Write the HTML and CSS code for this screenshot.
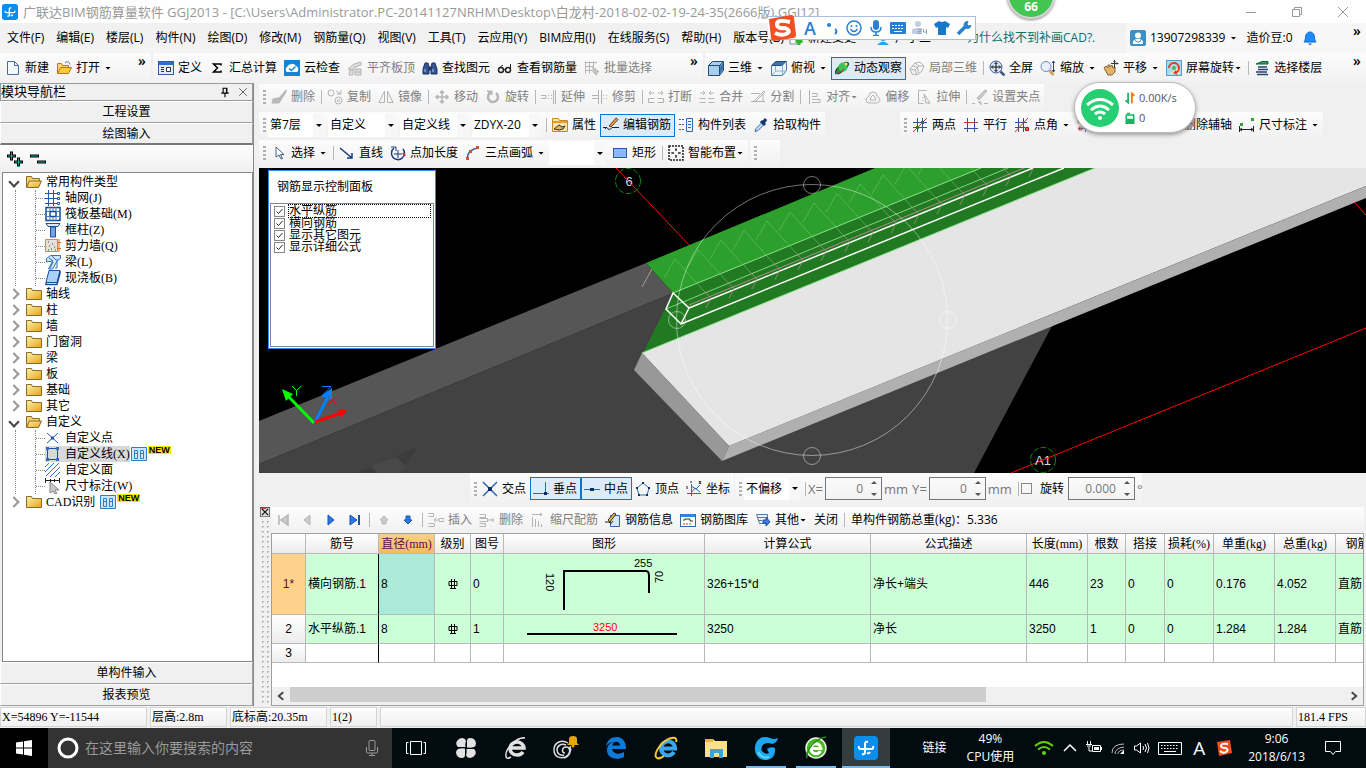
FILE: index.html
```html
<!DOCTYPE html>
<html lang="zh-CN">
<head>
    <meta charset="UTF-8">
    <meta name="viewport" content="width=device-width, initial-scale=1.0">
    <title>广联达BIM钢筋算量软件 GGJ2013</title>
    <link rel="stylesheet" href="styles.css">
</head>
<body>
    <header class="titlebar">
        <svg class="ico" viewBox="0 0 24 24"><use href="#app-logo"/></svg>
        <h1>广联达BIM钢筋算量软件 GGJ2013 - [C:\Users\Administrator.PC-20141127NRHM\Desktop\白龙村-2018-02-02-19-24-35(2666版).GGJ12]</h1>
        <div class="win-btns">
            <button aria-label="最小化"><svg class="ico" viewBox="0 0 16 16"><path d="M3 8.500h10"/></svg></button>
            <button aria-label="还原"><svg class="ico" viewBox="0 0 16 16"><path d="M3.500 5.500h7v7h-7zM5.500 5V3.500h7v7H11"/></svg></button>
            <button aria-label="关闭"><svg class="ico" viewBox="0 0 16 16"><path d="M3 3l10 10M13 3L3 13"/></svg></button>
        </div>
    </header>

    <div class="menubar">
        <nav class="menus">
            <button>文件(F)</button>
            <button>编辑(E)</button>
            <button>楼层(L)</button>
            <button>构件(N)</button>
            <button>绘图(D)</button>
            <button>修改(M)</button>
            <button>钢筋量(Q)</button>
            <button>视图(V)</button>
            <button>工具(T)</button>
            <button>云应用(Y)</button>
            <button>BIM应用(I)</button>
            <button>在线服务(S)</button>
            <button>帮助(H)</button>
            <button>版本号(B)</button>
        </nav>
        <div class="extra">
            <button class="tb"><svg class="ico" viewBox="0 0 16 16"><path d="M2 1h9v13H2z" fill="#fff" stroke="#789"/><path d="M11 8v7M7.500 11.500h7" stroke="#2db52d" stroke-width="3"/></svg>新建变更<i class="caret"></i></button>
            <button class="tb"><svg class="ico" viewBox="0 0 16 16"><circle cx="8" cy="6" r="5" fill="#27a3e8" stroke="none"/><path d="M2 15q6-7 12 0z" fill="#27a3e8" stroke="none"/></svg>广小二</button>
            <a class="tip" href="#faq">为什么找不到补画CAD?.</a>
        </div>
        <div class="account">
            <button class="tb"><svg class="ico" viewBox="0 0 16 16"><rect width="16" height="16" rx="2" fill="#3d8fc4" stroke="none"/><circle cx="8" cy="5.500" r="3" fill="#fff" stroke="none"/><path d="M3 14v-3l3-2h4l3 2v3z" fill="#fff" stroke="none"/><path d="M5 10.500l3 2 3-2" stroke="#3d8fc4"/></svg>13907298339<i class="caret"></i></button>
            <button class="tb">造价豆:0</button>
            <button class="tb" aria-label="消息"><svg class="ico" viewBox="0 0 16 16"><path d="M2 12c2-2 1-5 2-7 1-2 2-3 4-3s3 1 4 3c1 2 0 5 2 7z" fill="#1b8cff" stroke="#1565c0"/><path d="M6 13.500h4l-2 2z" fill="#1b6cd0" stroke="none"/></svg></button>
            <span class="more">»</span>
        </div>
    </div>

    <div class="mainbar">
        <div class="group g-file">
            <button class="tb"><svg class="ico" viewBox="0 0 16 16"><path d="M2.500 1.500h7l4 4v9h-11z" fill="#f5faff" stroke="#4b6b98"/><path d="M9.500 1.500v4h4" stroke="#4b6b98"/></svg>新建</button>
            <button class="tb"><svg class="ico" viewBox="0 0 16 16"><path d="M1.500 13.500V3.500h4l1 2h6v2" fill="#f8d77a" stroke="#b27c14"/><path d="M1.500 13.500l3-6h11l-3 6z" fill="#fdc64b" stroke="#b27c14"/><path d="M9 2.500q4-2 5 2" stroke="#57749b"/></svg>打开<i class="caret"></i></button>
            <span class="more">»</span>
        </div>
        <div class="group g-define">
            <button class="tb"><svg class="ico" viewBox="0 0 16 16"><rect x=".5" y="1.500" width="15" height="13" fill="#dfeafa" stroke="#2f5fa8"/><path d="M1 3.500h14" stroke="#2f6fd0" stroke-width="3"/><path d="M3 7.500h3M3 9.500h3M3 11.500h3" stroke="#333"/><path d="M8.500 7.500h4v4h-4z" fill="#fff" stroke="#333"/></svg>定义</button>
            <button class="tb"><svg class="ico" viewBox="0 0 16 16"><path d="M12 5.500V4H4.500l4 4-4 4H12v-1.500" stroke="#000" stroke-width="1.500"/></svg>汇总计算</button>
            <button class="tb"><svg class="ico" viewBox="0 0 16 16"><rect width="16" height="16" fill="#1484d4" stroke="none"/><path d="M3 12a3 3 0 0 1 0-5 5 4.500 0 0 1 9-1 3.500 3.500 0 0 1 1 6z" fill="#fff" stroke="none"/><path d="M5 8.500l2.500 2 4-4" stroke="#1484d4" stroke-width="1.500"/></svg>云检查</button>
            <button class="tb" disabled><svg class="ico" viewBox="0 0 16 16"><path d="M1 9l6-5 7-2v3L8 7l-2 3zM3 10h3v5H2zM8 9h6v6H8zM8 12h6" fill="#ddd"/></svg>平齐板顶</button>
            <button class="tb"><svg class="ico" viewBox="0 0 16 16"><path d="M3 3h3l1 4v7H1V9zM10 3h3l2 6v5H9V7zM7 7h2v3H7z" fill="#34558f" stroke="#1c3566"/><path d="M3 9v3M11 9v3" stroke="#b5cdf5"/></svg>查找图元</button>
            <button class="tb"><svg class="ico" viewBox="0 0 16 16"><circle cx="4" cy="10" r="2.500" stroke="#222" stroke-width="1.500"/><circle cx="11" cy="10" r="2.500" stroke="#222" stroke-width="1.500"/><path d="M6.500 9.500h2M2 8l4-3M13.500 9V4" stroke="#222"/></svg>查看钢筋量</button>
            <button class="tb" disabled><svg class="ico" viewBox="0 0 16 16"><path d="M1.500 1.500v12M5.500 1.500v12M9.500 1.500v6M1 2.500h12M1 6.500h9M1 10.500h7"/><path d="M9 7l6 5h-3l1 3-2-1-2-2z" fill="#ccc"/></svg>批量选择</button>
            <span class="more">»</span>
        </div>
        <div class="group g-view">
            <button class="tb"><svg class="ico" viewBox="0 0 16 16"><path d="M.5 5.500l4-4h11v9l-4 5H.5z" fill="#a8d0ee" stroke="#234c78"/><path d="M12 6l3-3v7l-3 4z" fill="#3d78ad" stroke="none"/><path d="M.5 5.500h11v10M11.500 5.500l4-4" stroke="#234c78"/></svg>三维<i class="caret"></i></button>
            <button class="tb"><svg class="ico" viewBox="0 0 16 16"><path d="M.5 5.500l4-4h11v9l-4 5H.5z" fill="#eaf5ff" stroke="#4a7dac"/><path d="M1 5.500l4-4h10l-4 4z" fill="#3977ae" stroke="#234c78"/><path d="M11.500 5.500v10M4.500 6v5M1 15l4-4h10" stroke="#86b0d4"/></svg>俯视<i class="caret"></i></button>
            <button class="tb on"><svg class="ico" viewBox="0 0 16 16"><ellipse cx="8" cy="8" rx="8" ry="3" transform="rotate(-40 8 8)" fill="#27923e" stroke="#124f1f"/><circle cx="9" cy="7" r="4.500" fill="#3fc25a" stroke="none"/><path d="M1 14q4 0 9-5" stroke="#c33"/><circle cx="12" cy="4" r="1.500" fill="#ffe25b" stroke="none"/></svg>动态观察</button>
            <button class="tb" disabled><svg class="ico" viewBox="0 0 16 16"><path d="M1 9l5-6 5-1 4 4-2 5-5 4-5-1zM1 9l5 1 4-4 5 0M6 10l2 5M6 3l4 3M3.500 6l5 1 1 6"/></svg>局部三维</button>
            <i class="sep"></i>
            <button class="tb"><svg class="ico" viewBox="0 0 16 16"><circle cx="7" cy="7" r="6" fill="#d7e6f8" stroke="#3b5788"/><path d="M11.500 11.500l4 4" stroke="#3b5788" stroke-width="2.500"/><path d="M7 2.500v9M2.500 7h9M5.500 4L7 2.500 8.500 4M5.500 10L7 11.500 8.500 10M4 5.500L2.500 7 4 8.500M10 5.500L11.500 7 10 8.500" stroke="#111"/></svg>全屏</button>
            <button class="tb"><svg class="ico" viewBox="0 0 16 16"><circle cx="6" cy="6.500" r="5" fill="#e7f0fa" stroke="#7189ac"/><path d="M9.500 10.500l4 4.500" stroke="#caa460" stroke-width="3"/><path d="M13.500 1v11M12 3l1.500-2L15 3M12 10l1.500 2 1.500-2" stroke="#27468a"/></svg>缩放<i class="caret"></i></button>
            <button class="tb"><svg class="ico" viewBox="0 0 16 16"><path d="M1 8l2-2 2 2V5h2v2l2-2 1 3 2-1v5l-3 3H5z" fill="#dfb46c" stroke="#8a6226"/><path d="M11.500 0v8M8 3.500h7M10.500 1.500l1-1 1 1M14 2.500l1 1-1 1" stroke="#333"/></svg>平移<i class="caret"></i></button>
            <button class="tb"><svg class="ico" viewBox="0 0 16 16"><rect x=".5" y=".5" width="15" height="15" fill="#a9daf2" stroke="#4fa0cf"/><path d="M2 14c6-2 7-6 12-6v6z" fill="#f5ecb2" stroke="none"/><path d="M3 8a5 5 0 1 1 6 5" stroke="#e23a2c" stroke-width="2"/><path d="M10 10l-3 3 4 2z" fill="#e23a2c" stroke="none"/><circle cx="8" cy="8" r="2" fill="#50b548" stroke="none"/></svg>屏幕旋转<i class="caret tight"></i></button>
            <i class="sep"></i>
            <button class="tb"><svg class="ico" viewBox="0 0 16 16"><path d="M2 4l6-2.500h6V4z" fill="#2c9e62" stroke="#17633a"/><path d="M4 7h9M4 9.500h10M2 12h11M3 14.500h11" stroke="#22466f" stroke-width="1.500"/></svg>选择楼层</button>
            <span class="more">»</span>
        </div>
    </div>

    <main class="workspace">
        <aside class="sidebar">
            <div class="side-title">
                <h2>模块导航栏</h2>
                <button aria-label="固定"><svg class="ico small" viewBox="0 0 16 16"><path d="M5.500 9V3h5v6M10 3v6M3 9.500h10M8 10v5" stroke="#000" stroke-width="1.500"/></svg></button>
                <button aria-label="关闭面板"><svg class="ico small" viewBox="0 0 16 16"><path d="M3 3l10 10M13 3L3 13" stroke="#333"/></svg></button>
            </div>
            <button class="side-btn">工程设置</button>
            <button class="side-btn pressed">绘图输入</button>
            <div class="side-tools">
                <button aria-label="全部展开"><svg class="ico" viewBox="0 0 16 16"><path d="M0 5h9M4.500 .5v9M7 11h9M11.500 6.500v9" stroke="#000" stroke-width="3"/><path d="M1 5h7M4.500 1.500v7M8 11h7M11.500 7.500v7" stroke="#1fa89a"/></svg></button>
                <button aria-label="全部折叠"><svg class="ico" viewBox="0 0 16 16"><path d="M0 5h9M7 11h9" stroke="#000" stroke-width="3"/><path d="M1 5h7M8 11h7" stroke="#1fa89a"/></svg></button>
            </div>
            <ul class="tree">
                <li class="row open"><svg class="ico folder" viewBox="0 0 16 16"><use href="#folder-open"/></svg>常用构件类型</li>
                <li>
                    <ul>
                        <li class="leaf"><svg class="ico" viewBox="0 0 16 16"><path d="M0 3.500h12M0 8.500h12M0 13.500h12M3.500 0v16M8.500 0v16" stroke="#2458b0"/><path d="M12.500 2.500h2v2h-2zM12.500 7.500h2v2h-2zM12.500 12.500h2v2h-2z" stroke="#2458b0"/></svg>轴网(J)</li>
                        <li class="leaf"><svg class="ico" viewBox="0 0 16 16"><path d="M1 1.500h14v13H1zM5 5.500h6v5H5z" stroke="#114a94" stroke-width="1.500"/><path d="M1 5.500h4M1 10.500h4M11 5.500h4M11 10.500h4M5 1v4M11 1v4M5 10v5M11 10v5M8 1v4M8 11v4" stroke="#3f7cc4"/></svg>筏板基础(M)</li>
                        <li class="leaf"><svg class="ico" viewBox="0 0 16 16"><path d="M1 1.500h14l-2 3H3z" fill="#d9e9fb" stroke="#1e4f9e"/><path d="M5.500 5h5v10h-5z" fill="#6fa3e6" stroke="#1e4f9e"/></svg>框柱(Z)</li>
                        <li class="leaf"><svg class="ico" viewBox="0 0 16 16"><path d="M.5 1.500h12v12H.500z" fill="#e6e0dc" stroke="#d58466"/><path d="M3 4h1M7 6h1M4 8h1M9 9h1M6 11h1M3 12h1M10 12h1" stroke="#444"/><path d="M14 1v13M12 4.500h4M12 10.500h4" stroke="#c87022"/></svg>剪力墙(Q)</li>
                        <li class="leaf"><svg class="ico" viewBox="0 0 16 16"><path d="M1.500 4.500l4-3h10v3l-3 2-5 8.500h-4l4-8-6 1z" fill="#cfe4fa" stroke="#2d74c4"/><path d="M4 4l4 3M7 2l4 4M8 8l-3 6M12 5v9h-2" stroke="#2d74c4"/></svg>梁(L)</li>
                        <li class="leaf"><svg class="ico" viewBox="0 0 16 16"><path d="M4 .5h11l-3 12H1z" fill="#a8d1f5" stroke="#1e4f9e"/><path d="M1 12.500v2h11l3-11V1" stroke="#1e4f9e" stroke-width="1.500"/></svg>现浇板(B)</li>
                    </ul>
                </li>
                <li class="row"><svg class="ico folder" viewBox="0 0 16 16"><use href="#folder"/></svg>轴线</li>
                <li class="row"><svg class="ico folder" viewBox="0 0 16 16"><use href="#folder"/></svg>柱</li>
                <li class="row"><svg class="ico folder" viewBox="0 0 16 16"><use href="#folder"/></svg>墙</li>
                <li class="row"><svg class="ico folder" viewBox="0 0 16 16"><use href="#folder"/></svg>门窗洞</li>
                <li class="row"><svg class="ico folder" viewBox="0 0 16 16"><use href="#folder"/></svg>梁</li>
                <li class="row"><svg class="ico folder" viewBox="0 0 16 16"><use href="#folder"/></svg>板</li>
                <li class="row"><svg class="ico folder" viewBox="0 0 16 16"><use href="#folder"/></svg>基础</li>
                <li class="row"><svg class="ico folder" viewBox="0 0 16 16"><use href="#folder"/></svg>其它</li>
                <li class="row open"><svg class="ico folder" viewBox="0 0 16 16"><use href="#folder-open"/></svg>自定义</li>
                <li>
                    <ul>
                        <li class="leaf"><svg class="ico" viewBox="0 0 16 16"><path d="M2 3l11 10M13 3L2 13" stroke="#2458b0"/><path d="M6 6.500h3v3H6z" fill="#2458b0" stroke="none"/></svg>自定义点</li>
                        <li class="leaf"><span class="sel"><svg class="ico" viewBox="0 0 16 16"><path d="M2.500 2.500h10v11h-10z" stroke="#1e4f9e"/><path d="M1 1h3v3H1zM11 1h3v3h-3zM1 12h3v3H1zM11 12h3v3h-3z" fill="#2f6fd0" stroke="none"/></svg>自定义线(X)</span><svg class="ico book" viewBox="0 0 16 16"><use href="#book"/></svg><b class="new">NEW</b></li>
                        <li class="leaf"><svg class="ico" viewBox="0 0 16 16"><path d="M0 5l4-4M0 10l9-9M1 14L14 1M5 15L15 5M10 15l5-5" stroke="#2f6fd0"/></svg>自定义面</li>
                        <li class="leaf"><svg class="ico" viewBox="0 0 16 16"><path d="M.5 0v5M14.500 0v5M1 2.500h14M5.500 1v3M9.500 1v3" stroke="#222"/><path d="M5 4l9 8h-4l2 4-2 0-2-3-3 2z" fill="#c9c9c9" stroke="#888"/></svg>尺寸标注(W)</li>
                    </ul>
                </li>
                <li class="row"><svg class="ico folder" viewBox="0 0 16 16"><use href="#folder"/></svg>CAD识别<svg class="ico book gap" viewBox="0 0 16 16"><use href="#book"/></svg><b class="new">NEW</b></li>
            </ul>
            <button class="side-btn">单构件输入</button>
            <button class="side-btn">报表预览</button>
        </aside>

        <section class="content">
            <div class="bars">
                <div class="bar">
                    <div class="group">
                        <i class="grip"></i>
                        <button class="tb" disabled><svg class="ico" viewBox="0 0 16 16"><path d="M15 1L8 9l2 2 5-8zM7 9l-5 1-1 4h7l2-3z" fill="#bbb"/></svg>删除</button>
                        <i class="sep"></i>
                        <button class="tb" disabled><svg class="ico" viewBox="0 0 16 16"><circle cx="4" cy="4" r="3"/><circle cx="11.500" cy="11.500" r="3.500"/><circle cx="11.500" cy="11.500" r="1"/><path d="M9 2l5 3M14 1v4h-4"/></svg>复制</button>
                        <button class="tb" disabled><svg class="ico" viewBox="0 0 16 16"><path d="M6.500 2v11.500H1zM9.500 2v11.500H15z"/></svg>镜像</button>
                        <i class="sep"></i>
                        <button class="tb" disabled><svg class="ico" viewBox="0 0 16 16"><path d="M8 2v12M2 8h12M6 4l2-2 2 2M6 12l2 2 2-2M4 6L2 8l2 2M12 6l2 2-2 2" stroke-width="1.500"/></svg>移动</button>
                        <button class="tb" disabled><svg class="ico" viewBox="0 0 16 16"><path d="M5 4a5 5 0 1 0 6 0" stroke-width="2.500"/><path d="M2 2h5v4z" fill="#bbb"/></svg>旋转</button>
                        <i class="sep"></i>
                        <button class="tb" disabled><svg class="ico" viewBox="0 0 16 16"><path d="M0 6.500h5v3H0M7 6.500h1M10 6.500h1M7 9.500h1M10 9.500h1M12.500 1v14M14.500 1v14"/></svg>延伸</button>
                        <button class="tb" disabled><svg class="ico" viewBox="0 0 16 16"><path d="M0 6.500h6M0 9.500h6M6.500 1v14M9.500 1v14M11 6.500h1M14 6.500h1M11 9.500h1M14 9.500h1"/></svg>修剪</button>
                        <i class="sep"></i>
                        <button class="tb" disabled><svg class="ico" viewBox="0 0 16 16"><path d="M1 4h5M3 2L1 4l2 2M10 4h5M13 2l2 2-2 2M6.500 9.500h-6v4h6M9.500 9.500h6v4h-6"/></svg>打断</button>
                        <button class="tb" disabled><svg class="ico" viewBox="0 0 16 16"><path d="M1 4h5M4 2l2 2-2 2M10 4h5M12 2l-2 2 2 2M.5 9.500h6M.5 13.500h6M9.500 9.500h6M9.500 13.500h6"/></svg>合并</button>
                        <button class="tb" disabled><svg class="ico" viewBox="0 0 16 16"><path d="M1 4.500h9M1 12.500h14M13 5v7M4 12l10-10 1 1L6 12"/></svg>分割</button>
                        <i class="sep"></i>
                        <button class="tb" disabled><svg class="ico" viewBox="0 0 16 16"><path d="M3.500 1v14M6 4.500h5v3H6M6 10.500h8v3H6"/></svg>对齐<i class="caret tight"></i></button>
                        <button class="tb" disabled><svg class="ico" viewBox="0 0 16 16"><path d="M1 11q0-2 3-4 0-4 4-4t4 4q3 2 3 4t-3 3H4q-3 0-3-3zM5 11l1-3 2-2 2 2 1 3z"/></svg>偏移</button>
                        <button class="tb" disabled><svg class="ico" viewBox="0 0 16 16"><path d="M2.500 14.500v-13h8M2.500 14.500h5M13 14v1M7 8v1M7 11v1M10 13v1"/><path d="M8 5l6 9h-4z"/></svg>拉伸</button>
                        <i class="sep"></i>
                        <button class="tb" disabled><svg class="ico" viewBox="0 0 16 16"><path d="M0 14.500h3M6 13h3v3M12 14.500h4M5 9L13 1l2 1-8 9z" fill="#ccc"/></svg>设置夹点</button>
                    </div>
                </div>
                <div class="bar">
                    <div class="group">
                        <i class="grip"></i>
                        <select class="combo" aria-label="楼层"><option>第7层</option></select>
                        <select class="combo wide" aria-label="类别"><option>自定义</option></select>
                        <select class="combo wide" aria-label="构件类型"><option>自定义线</option></select>
                        <select class="combo wide" aria-label="构件"><option>ZDYX-20</option></select>
                        <i class="sep"></i>
                        <button class="tb"><svg class="ico" viewBox="0 0 16 16"><path d="M.5 1.500h6l1 2h8v11H.5z" fill="#fbe3a9" stroke="#c88722"/><path d="M1 5h14" stroke="#e79a2e" stroke-width="2"/><path d="M2 12l5-4 3 2 3-1-2 3-4 1z" fill="#e4b35c" stroke="#333"/></svg>属性</button>
                        <button class="tb on"><svg class="ico" viewBox="0 0 16 16"><path d="M0 10.500h4q2 4 5 0h7M2 12l2-2" stroke="#222"/><path d="M6 9l7-8 2 1.500-7 7.500z" fill="#e8a04a" stroke="#7c3c12"/></svg>编辑钢筋</button>
                        <button class="tb"><svg class="ico" viewBox="0 0 16 16"><path d="M1 2.500h2M1 7.500h2M1 12.500h2M4 2.500h2M4 7.500h2M4 12.500h2" stroke="#555"/><path d="M8.500 1.500h6v13h-6z" fill="#e9f2fd" stroke="#3067b5"/><path d="M10 4.500h3M10 7.500h3M10 10.500h3" stroke="#3067b5"/></svg>构件列表</button>
                        <button class="tb"><svg class="ico" viewBox="0 0 16 16"><path d="M2 14.500l1-3 6-6 2 2-6 6z" fill="#cde2f8" stroke="#3067b5"/><path d="M8 4l4 4M10 6l3-4" stroke="#12346f" stroke-width="3"/></svg>拾取构件</button>
                    </div>
                    <div class="group right">
                        <i class="grip"></i>
                        <button class="tb"><svg class="ico" viewBox="0 0 16 16"><path d="M5.500 1v14M10.500 1v14M1 5.500h14M1 10.500h14" stroke="#334fa0"/><path d="M1 15L15 1" stroke="#c33"/><path d="M9 4h3v3H9zM4 9h3v3H4z" fill="#2a7a2a" stroke="none"/></svg>两点</button>
                        <button class="tb"><svg class="ico" viewBox="0 0 16 16"><path d="M4.500 1v14M11.500 1v14M1 11.500h14" stroke="#334fa0"/><path d="M1 5.500h14" stroke="#c33"/></svg>平行</button>
                        <button class="tb"><svg class="ico" viewBox="0 0 16 16"><path d="M4.500 1v14M9.500 1v14M1 5.500h12M1 10.500h10" stroke="#334fa0"/><path d="M1 15L14 1" stroke="#c33"/><circle cx="13" cy="12" r="1.500" stroke="#c00" stroke-width="1.500"/></svg>点角<i class="caret"></i></button>
                        <button class="tb three-point" aria-label="三点辅轴"><svg class="ico" viewBox="0 0 16 16"><path d="M1 5.500h14M1 11.500h14M8.500 1v14" stroke="#334fa0"/><path d="M1 3v3h4M2 10h3v3H2z" stroke="#c33"/></svg></button>
                        <button class="tb"><svg class="ico" viewBox="0 0 16 16"><path d="M5.500 1v14M10.500 1v14M1 5.500h14M1 10.500h14" stroke="#334fa0"/></svg>删除辅轴</button>
                        <button class="tb"><svg class="ico" viewBox="0 0 16 16"><path d="M.5 9v6M14.500 9v6M1 12.500h13M3 11l-2 1.500L3 14M12 11l2 1.500L12 14" stroke="#222"/><path d="M1 6h3v3H1zM12 1h3v3h-3z" fill="#35a335" stroke="none"/></svg>尺寸标注<i class="caret"></i></button>
                    </div>
                </div>
                <div class="bar">
                    <div class="group">
                        <i class="grip"></i>
                        <button class="tb"><svg class="ico" viewBox="0 0 16 16"><path d="M5 2v10l3-2 2 4 1.500-.5-2-4H13z" fill="#fff" stroke="#445e83"/></svg>选择<i class="caret"></i></button>
                        <i class="sep"></i>
                        <button class="tb"><svg class="ico" viewBox="0 0 16 16"><path d="M1 3l12 10M13 8v5H8" stroke="#173a7c" stroke-width="1.500"/></svg>直线</button>
                        <button class="tb"><svg class="ico" viewBox="0 0 16 16"><path d="M4 3a6.500 6.500 0 1 0 9 1" stroke="#173a7c" stroke-width="1.500"/><path d="M8 5v8M4 9h8M1 2h5v4" stroke="#173a7c"/><path d="M13 8l2 3" stroke="#c33" stroke-width="2"/></svg>点加长度</button>
                        <button class="tb"><svg class="ico" viewBox="0 0 16 16"><path d="M2 14Q3 4 13 3" stroke="#34558f" stroke-width="1.500"/><path d="M1 12h3v3H1zM4 5h3v3H4zM11 1h3v3h-3z" fill="#d2502f" stroke="none"/></svg>三点画弧<i class="caret"></i></button>
                        <select class="combo" aria-label="画弧方式"><option></option></select>
                        <button class="tb"><svg class="ico" viewBox="0 0 16 16"><rect x="1.500" y="3.500" width="13" height="9" fill="#8cb8f5" stroke="#2c58a8"/></svg>矩形</button>
                        <i class="sep"></i>
                        <button class="tb"><svg class="ico" viewBox="0 0 16 16"><rect x="1" y="1" width="14" height="14" stroke="#222" stroke-width="1.500" stroke-dasharray="2 1"/><path d="M8 3v3M8 10v3M3 8h3M10 8h3M7 5h2M7 11h2M5 7v2M11 7v2" stroke="#222"/></svg>智能布置<i class="caret tight"></i></button>
                    </div>
                    <div class="group stub"><i class="grip"></i></div>
                </div>
            </div>

            <div class="viewport">
                <svg class="scene" viewBox="259 168 1107 305" preserveAspectRatio="xMinYMin slice">
                    <rect x="259" y="168" width="1107" height="305" fill="#000"/>
                    <path d="M616 168L690 246" stroke="#f00"/>
                    <polygon points="259,464 673,293 1052,326 974,473 259,473" fill="#424242"/>
                    <polygon points="259,421 646,263 673,293 259,464" fill="#565656"/>
                    <polygon points="356,473 418,447 400,473" fill="#3c3c3c"/>
                    <polygon points="370,466 396,457 406,466 400,473 378,473" fill="#484848"/>
                    <polygon points="646,263 875,168 981,168 673,293" fill="#2c9f2c"/>
                    <polygon points="673,293 981,168 1095,168 642,353 634,371" fill="#217a21"/>
                    <polygon points="642,353 1095,168 1366,168 1366,186 729,446" fill="#e5e5e5"/>
                    <polygon points="729,446 1366,186 1366,198 722,461" fill="#b0b0b0"/>
                    <polygon points="642,353 729,446 722,461 634,370" fill="#989898"/>
                    <path d="M642 353L1095 168M673 293L981 168" stroke="#8fe88f"/>
                    <path d="M666 309L1008 168" stroke="#7fd77f"/>
                    <path d="M689 308L1033 168M681 324L1064 168M673 293L689 308L681 324L666 309Z" stroke="#fff" stroke-width="1.500"/>
                    <path d="M689 305L1029 166" stroke="#b08c8c"/>
                    <path d="M642 287L652 269" stroke="#a99a9a"/>
                    <g stroke-width=".7">
                        <g id="stirrup"><path d="M664 278L675 259L703 290" stroke="#5fc25f"/><path d="M703 290L711 298L706 308" stroke="#b58f8f"/></g>
                        <use href="#stirrup" x="23" y="-9.500"/>
                        <use href="#stirrup" x="46" y="-19"/>
                        <use href="#stirrup" x="69" y="-28.500"/>
                        <use href="#stirrup" x="92" y="-38"/>
                        <use href="#stirrup" x="115" y="-47"/>
                        <use href="#stirrup" x="139" y="-56"/>
                        <use href="#stirrup" x="162" y="-65.500"/>
                        <use href="#stirrup" x="185" y="-75"/>
                        <use href="#stirrup" x="208" y="-84"/>
                        <use href="#stirrup" x="231" y="-94"/>
                        <use href="#stirrup" x="254" y="-103"/>
                        <use href="#stirrup" x="277" y="-112"/>
                        <use href="#stirrup" x="300" y="-122"/>
                        <use href="#stirrup" x="323" y="-131"/>
                    </g>
                    <g stroke="#fff" stroke-opacity=".45">
                        <circle cx="812" cy="320" r="135.500"/>
                        <circle cx="812" cy="185" r="8.500"/>
                        <circle cx="812" cy="456" r="8.500"/>
                        <circle cx="677" cy="320" r="8.500"/>
                        <circle cx="948" cy="320" r="8.500"/>
                    </g>
                    <path d="M1011 473L1366 328M1355 203l11 12" stroke="#f00"/>
                    <circle cx="628" cy="181" r="12.500" stroke="#0a8a0a" stroke-dasharray="6 2"/>
                    <circle cx="1043" cy="460" r="12.500" stroke="#0a8a0a" stroke-dasharray="6 2"/>
                    <text class="mark" x="629" y="186">6</text>
                    <text class="mark" x="1043" y="465">A1</text>
                    <path d="M1038 462l10-4M624 177l8 8" stroke="#f00"/>
                    <path d="M314 423L288 396" stroke="#0f0" stroke-width="3"/>
                    <polygon points="282,389 293,394 286,401" fill="#0f0"/>
                    <path d="M315 422L328 397" stroke="#0080ff" stroke-width="3"/>
                    <polygon points="332,388 332,401 321,396" fill="#0080ff"/>
                    <path d="M315 422L341 413" stroke="#f00" stroke-width="3"/>
                    <polygon points="347,410 341,418 338,409" fill="#f00"/>
                    <path d="M292 386l4.500 4.500 5-4.500M296.500 390v6" stroke="#0f0"/>
                    <path d="M322 386.500h9l-8 8" stroke="#0080ff"/>
                    <path d="M328 397l9 8M337 397l-9 8" stroke="#f00"/>
                </svg>
                <form class="rebar-panel">
                    <h3>钢筋显示控制面板</h3>
                    <div class="checks">
                        <label class="focus"><input type="checkbox" checked><span>水平纵筋</span></label>
                        <label><input type="checkbox" checked><span>横向钢筋</span></label>
                        <label><input type="checkbox" checked><span>显示其它图元</span></label>
                        <label><input type="checkbox" checked><span>显示详细公式</span></label>
                    </div>
                </form>
            </div>

            <div class="snapbar">
                <div class="group">
                    <i class="grip"></i>
                    <button class="tb"><svg class="ico" viewBox="0 0 16 16"><path d="M1 1l14 14M15 1L1 15" stroke="#2b6cb8" stroke-width="1.500"/><path d="M6 6h4v4H6z" fill="#0b2d6b" stroke="none"/></svg>交点</button>
                    <button class="tb on"><svg class="ico" viewBox="0 0 16 16"><path d="M0 12.500h16M12.500 1v11" stroke="#2b6cb8"/><path d="M11 11h3v3h-3z" fill="#0b2d6b" stroke="none"/></svg>垂点</button>
                    <button class="tb on"><svg class="ico" viewBox="0 0 16 16"><path d="M0 8.500h16" stroke="#2b6cb8"/><path d="M6 7h4v3H6z" fill="#0b2d6b" stroke="none"/></svg>中点</button>
                    <button class="tb"><svg class="ico" viewBox="0 0 16 16"><path d="M8 2l6 5-2 7H4L2 7z" stroke="#2b6cb8"/><path d="M7 1h2v2H7zM13 6h2v2h-2zM1 6h2v2H1zM3 13h2v2H3zM11 13h2v2h-2z" fill="#0b2d6b" stroke="none"/></svg>顶点</button>
                    <button class="tb"><svg class="ico" viewBox="0 0 16 16"><path d="M5.500 3v12M1 12.500h14M5 12l4-5 5 4M5 5l5 3 4-4" stroke="#2b6cb8"/><path d="M13 0l2 3M15 0l-2 3M1 5v3M5 0v2" stroke="#222"/></svg>坐标</button>
                </div>
                <div class="group">
                    <i class="grip"></i>
                    <select class="combo" aria-label="偏移方式"><option>不偏移</option></select>
                    <i class="sep"></i>
                    <label class="num-field">X=<input type="number" value="0" readonly></label><span class="unit">mm</span>
                    <label class="num-field">Y=<input type="number" value="0" readonly></label><span class="unit">mm</span>
                    <i class="sep"></i>
                    <label class="rotate"><input type="checkbox">旋转</label>
                    <label class="num-field long"><input type="text" value="0.000" aria-label="旋转角度" readonly>°</label>
                </div>
            </div>

            <div class="dock">
                <div class="dock-grip">
                    <button aria-label="关闭编辑区"><svg class="ico" viewBox="0 0 16 16"><path d="M0 0h16v16H0z" fill="#ddd" stroke="#333" stroke-width="2"/><path d="M3 3l10 10M13 3L3 13" stroke="#111" stroke-width="2"/><path d="M2 2h8" stroke="#c22" stroke-width="2"/></svg></button>
                    <i></i>
                </div>
                <div class="dock-body">
                    <div class="dock-tools">
                        <button class="nav" aria-label="首行" disabled><svg class="ico" viewBox="0 0 16 16"><path d="M4 3v10M13 3L6 8l7 5z" fill="#ccc" stroke-width="1.500"/></svg></button>
                        <button class="nav" aria-label="上一行" disabled><svg class="ico" viewBox="0 0 16 16"><path d="M11 3L5 8l6 5z" fill="#ccc"/></svg></button>
                        <button class="nav" aria-label="下一行"><svg class="ico" viewBox="0 0 16 16"><path d="M5 3l6 5-6 5z" fill="#2b78e4" stroke="#1b4fae"/></svg></button>
                        <button class="nav" aria-label="末行"><svg class="ico" viewBox="0 0 16 16"><path d="M3 3l7 5-7 5z" fill="#2b78e4" stroke="#1b4fae"/><path d="M12 3v10" stroke="#1b4fae" stroke-width="2"/></svg></button>
                        <i class="sep"></i>
                        <button class="nav" aria-label="上移" disabled><svg class="ico" viewBox="0 0 16 16"><path d="M8 4l4 4h-2v4H6V8H4z" fill="#ccc"/></svg></button>
                        <button class="nav" aria-label="下移"><svg class="ico" viewBox="0 0 16 16"><path d="M8 12l4-4h-2V4H6v4H4z" fill="#2b78e4" stroke="#1b4fae"/></svg></button>
                        <i class="sep"></i>
                        <button class="tb" disabled><svg class="ico" viewBox="0 0 16 16"><path d="M.5 1.500h5v3h-5M.5 11.500h6v3h-6M6 8h5M8 6L6 8l2 2M11 6.500h5v3h-5z"/></svg>插入</button>
                        <button class="tb" disabled><svg class="ico" viewBox="0 0 16 16"><path d="M.5 2.500h6v3h-6M.5 6.500h8v3h-8M.5 11.500h6v3h-6M9 8h6M13 6l2 2-2 2"/></svg>删除</button>
                        <button class="tb" disabled><svg class="ico" viewBox="0 0 16 16"><path d="M2 2.500h10M10 1l2 1.500L10 4M2.500 5v10M5.500 7v8M8.500 9v6M11.500 12v3"/></svg>缩尺配筋</button>
                        <button class="tb"><svg class="ico" viewBox="0 0 16 16"><path d="M5.500 3.500h9v11h-9z" fill="#d6e7fb" stroke="#3067b5"/><path d="M0 10h4q2 3 4-1" stroke="#222"/><path d="M3 8l6-7 2 1-6 8z" fill="#e6b53c" stroke="#333"/></svg>钢筋信息</button>
                        <button class="tb"><svg class="ico" viewBox="0 0 16 16"><rect x=".5" y="2.500" width="15" height="12" fill="#fff" stroke="#3067b5"/><path d="M1 3.500h14" stroke="#3d7fd6" stroke-width="3"/><path d="M3 8h2v-1h5v2h3" stroke="#333"/><path d="M3 12h2M6 12h2" stroke="#c33"/><path d="M9 12h2" stroke="#2a2"/></svg>钢筋图库</button>
                        <button class="tb"><svg class="ico" viewBox="0 0 16 16"><path d="M1.500 2.500h11v9h-8z" fill="#e9f2fd" stroke="#55779e"/><path d="M3 5.500h7M3 8.500h4" stroke="#55779e"/><path d="M8 8h3V5l4 5-4 4v-3H8z" fill="#3d7fd6" stroke="#1b4fae"/></svg>其他<i class="caret tight"></i></button>
                        <button class="tb">关闭</button>
                        <i class="sep"></i>
                        <span class="total">单构件钢筋总重(kg)：5.336</span>
                    </div>
                    <div class="grid-wrap">
                        <table class="grid">
                            <colgroup><col><col><col><col><col><col><col><col><col><col><col><col><col><col><col></colgroup>
                            <thead>
                                <tr><th></th><th>筋号</th><th class="active">直径(mm)</th><th>级别</th><th>图号</th><th>图形</th><th>计算公式</th><th>公式描述</th><th>长度(mm)</th><th>根数</th><th>搭接</th><th>损耗(%)</th><th>单重(kg)</th><th>总重(kg)</th><th>钢筋归类</th></tr>
                            </thead>
                            <tbody>
                                <tr class="tall">
                                    <th class="active">1*</th><td>横向钢筋.1</td><td class="cur">8</td>
                                    <td class="grade"><svg class="ico small" viewBox="0 0 12 12"><use href="#grade"/></svg></td><td>0</td>
                                    <td class="shape"><svg viewBox="0 0 200 60"><path d="M60 56V17H142q3 0 3 5v17" stroke="#000" stroke-width="2"/><text x="130" y="13">255</text><text transform="translate(42 19) rotate(90)">120</text><text transform="translate(159 29) rotate(-90)">70</text></svg></td>
                                    <td>326+15*d</td><td>净长+端头</td><td>446</td><td>23</td><td>0</td><td>0</td><td>0.176</td><td>4.052</td><td>直筋</td>
                                </tr>
                                <tr class="mid">
                                    <th>2</th><td>水平纵筋.1</td><td>8</td>
                                    <td class="grade"><svg class="ico small" viewBox="0 0 12 12"><use href="#grade"/></svg></td><td>1</td>
                                    <td class="shape"><svg viewBox="0 0 200 28"><path d="M23 19h150" stroke="#000" stroke-width="2"/><text class="red" x="89" y="16">3250</text></svg></td>
                                    <td>3250</td><td>净长</td><td>3250</td><td>1</td><td>0</td><td>0</td><td>1.284</td><td>1.284</td><td>直筋</td>
                                </tr>
                                <tr class="blank">
                                    <th>3</th><td></td><td></td><td></td><td></td><td></td><td></td><td></td><td></td><td></td><td></td><td></td><td></td><td></td><td></td>
                                </tr>
                            </tbody>
                        </table>
                    </div>
                    <div class="hscroll">
                        <button aria-label="向左滚动"><svg class="ico small" viewBox="0 0 16 16"><path d="M11 3L5 8l6 5" stroke="#444" stroke-width="2.500"/></svg></button>
                        <div class="track"><div class="thumb"></div></div>
                        <button aria-label="向右滚动"><svg class="ico small" viewBox="0 0 16 16"><path d="M5 3l6 5-6 5" stroke="#444" stroke-width="2.500"/></svg></button>
                    </div>
                </div>
            </div>
        </section>
    </main>

    <footer class="statusbar">
        <span class="s-pos">X=54896 Y=-11544</span>
        <span class="s-floor">层高:2.8m</span>
        <span class="s-base">底标高:20.35m</span>
        <span class="s-count">1(2)</span>
        <span class="s-fill"></span>
        <span class="s-fps">181.4 FPS</span>
    </footer>

    <div class="taskbar">
        <button class="start" aria-label="开始"><svg class="ico" viewBox="0 0 16 16"><path d="M0 2.500l7-1v6H0zM8 1.300L16 0v7.500H8zM0 8.500h7v6l-7-1zM8 8.500h8V16l-8-1.300z" fill="#fff" stroke="none"/></svg></button>
        <div class="search">
            <svg class="ico ring" viewBox="0 0 24 24"><circle cx="12" cy="12" r="9" stroke="#fff" stroke-width="3"/></svg>
            <input type="text" aria-label="搜索" placeholder="在这里输入你要搜索的内容">
            <svg class="ico mic" viewBox="0 0 16 16"><rect x="5" y="0.500" width="6" height="10" rx="1" stroke="#999"/><path d="M2.500 7v5q0 1 1 1h9q1 0 1-1V7M8 13v3M5 15.500h6" stroke="#999"/></svg>
        </div>
        <nav class="apps">
            <button aria-label="任务视图"><svg class="ico" viewBox="0 0 24 24"><path d="M6.500 5.500h11v13h-11zM4.500 6.500h-2v11h2M19.500 6.500h2v11h-2" stroke="#fff"/></svg></button>
            <button aria-label="启动台"><svg class="ico" viewBox="0 0 24 24"><path d="M11.500 11H4q-3-3-1-6 2-3 5-3 3 0 4 3-1 2-.5 6zM13 11.500V5q0-3 3-3 5 0 6 5 0 3-2 4-3 1-7 .500zM12.500 13H20q3 3 1 6-2 3-5 3-3 0-4-3 1-2 .5-6zM11 12.500V19q0 3-3 3-5 0-6-5 0-3 2-4 3-1 7-.500z" fill="#e2e2e2" stroke="none"/></svg></button>
            <button aria-label="浏览器"><svg class="ico" viewBox="0 0 24 24"><path d="M19 16a7 6.500 0 1 1 1-4H6.500" stroke="#e2e2e2" stroke-width="3.500"/><path d="M21 2q-6-1-13 6T2 20q0 4 5 1" stroke="#e2e2e2" stroke-width="1.500"/></svg></button>
            <button aria-label="通知助手"><svg class="ico bell" viewBox="0 0 28 24"><path d="M16 7C10 3 2 6 2 14s9 10 14 5c3-3 2-8-2-8s-5 6-1 6M14 9c-5-2-9 1-9 5 0 4 4 6 7 5M18 10c2 5-1 11-6 12" stroke="#ddd" stroke-width="1.500"/><path d="M15 9l2-2V3q0-3 4-3t4 3v4l2 2z" fill="#e8a60c" stroke="none"/><circle cx="21" cy="10" r="1.500" fill="#e8a60c" stroke="none"/></svg></button>
            <button aria-label="Edge"><svg class="ico" viewBox="0 0 24 24"><path d="M2 11C3 4 7 1 13 1c6 0 9 5 9 12H8c1 5 7 6 12 3v5c-8 4-17 1-17-7 0-5 4-8 8-8-5 0-8 2-9 5zM8.500 9.500H16c0-5-7-5-7.500 0z" fill="#0f7ad8" stroke="none"/></svg></button>
            <button aria-label="IE"><svg class="ico" viewBox="0 0 24 24"><path d="M20 16a7 7 0 1 1 1-3.500H7" stroke="#3aa7ec" stroke-width="4"/><path d="M22 6c2-6-5-5-11-1S0 18 2 21s5 1 8-1" stroke="#f5c931" stroke-width="2"/></svg></button>
            <button aria-label="文件资源管理器"><svg class="ico" viewBox="0 0 24 24"><path d="M1 3h8l2 2h12v16H1z" fill="#fbe08c" stroke="none"/><path d="M1 3h8v3H1z" fill="#e9b634" stroke="none"/><path d="M6 22v-9h13v9h-4v-5h-5v5z" fill="#38a5de" stroke="none"/></svg></button>
            <button class="run" aria-label="广联达"><svg class="ico" viewBox="0 0 24 24"><path d="M1 11C2 3 9-1 16 2q4 2 8 0-1 5-6 6-4-2-8 0-4 3-2 7 3 4 7 2l-2-4q4-3 8-1 1 10-8 12C5 25 0 18 1 11z" fill="#1ea7f0" stroke="none"/><path d="M4 16q4 7 11 5" stroke="#57dcf5" stroke-width="2"/></svg></button>
            <button class="run" aria-label="360浏览器"><svg class="ico" viewBox="0 0 24 24"><circle cx="12" cy="12" r="10" fill="#4bb52a" stroke="#e9f8e3" stroke-width="1.500"/><path d="M16.500 15a5 5 0 1 1 .5-2.500H8" stroke="#fff" stroke-width="3"/><path d="M22 1Q12 2 5 13q-3 6-2 9" stroke="#2b8f17" stroke-width="1.500"/></svg></button>
            <button class="run current" aria-label="钢筋算量"><svg class="ico" viewBox="0 0 24 24"><use href="#app-logo"/></svg></button>
        </nav>
        <div class="tray">
            <span class="t-link">链接</span>
            <span class="t-cpu">49%<br>CPU使用</span>
            <svg class="ico wifi" viewBox="0 0 20 16"><path d="M1 6q9-8 18 0M4 9.500q6-5 12 0" stroke="#5fd20a" stroke-width="2"/><circle cx="10" cy="13" r="2" fill="#5fd20a" stroke="none"/></svg>
            <svg class="ico" viewBox="0 0 16 16"><path d="M2 11l6-6 6 6" stroke="#fff" stroke-width="1.500"/></svg>
            <svg class="ico" viewBox="0 0 16 16"><path d="M6.500 5.500h8v6h-8zM15.500 7v3" stroke="#fff"/><path d="M8 7h5v3H8z" fill="#fff" stroke="none"/><path d="M1.500 1v3M4.500 1v3M0 4.500h6M1 6h4M3 7v4h3" stroke="#fff"/></svg>
            <svg class="ico" viewBox="0 0 16 16"><path d="M2 13Q2 4 14 4M5 14q0-6 9-7M8 14q0-4 6-4" stroke="#bbb"/><path d="M14 10v4h-4z" fill="#fff" stroke="none"/></svg>
            <svg class="ico" viewBox="0 0 16 16"><path d="M.5 6v4h2l4 3V3l-4 3zM9 6q1 2 0 4M11 4q3 4 0 8M13.500 3q3 5 0 10" stroke="#fff"/></svg>
            <svg class="ico kbd" viewBox="0 0 24 16"><path d="M.5 2.500h23v12H.5z" stroke="#fff"/><path d="M3 5.500h18M3 8.500h18" stroke="#fff" stroke-dasharray="1.500 1.500"/><path d="M6 11.500h12" stroke="#fff"/></svg>
            <span class="t-ime">A</span>
            <svg class="ico" viewBox="0 0 16 16"><path d="M1 2l13-2 2 13-13 3z" fill="#f04e1c" stroke="none"/><path d="M12 4Q5 3 5 5.500t5 2.500q3 2 0 4t-6-1" stroke="#fff" stroke-width="2"/></svg>
            <span class="t-clock">9:06<br>2018/6/13</span>
            <button aria-label="操作中心"><svg class="ico" viewBox="0 0 16 16"><path d="M.5 1.500h15v10h-5L8 14.500 5.500 11.500h-5z" stroke="#fff"/></svg></button>
        </div>
    </div>

    <!-- floating desktop widgets -->
    <div class="ball">66</div>
    <div class="ime-bar">
        <svg class="ico ime-logo" viewBox="0 0 28 28"><path d="M1 5L23 1q3 0 3 3l2 17q0 3-3 3L6 27q-3 0-3-3z" fill="#f25022" stroke="none"/><path d="M22 8Q9 5 9 10t8 4q7 3 1 6-5 2-11-1" stroke="#fff" stroke-width="4"/></svg>
        <b>A</b>
        <svg class="ico" viewBox="0 0 16 16"><circle cx="5" cy="5" r="2" fill="#2a7fd0" stroke="none"/><path d="M11 9q3 2 0 5" stroke="#2a7fd0" stroke-width="2"/></svg>
        <svg class="ico" viewBox="0 0 16 16"><circle cx="8" cy="8" r="7" stroke="#2a7fd0" stroke-width="1.500"/><path d="M4.500 9q3.500 5 7 0" stroke="#2a7fd0" stroke-width="1.500"/><circle cx="5.500" cy="6" r="1" fill="#2a7fd0" stroke="none"/><circle cx="10.500" cy="6" r="1" fill="#2a7fd0" stroke="none"/></svg>
        <svg class="ico" viewBox="0 0 16 16"><rect x="5" y="0" width="6" height="10" rx="3" fill="#2a7fd0" stroke="none"/><path d="M3 7q0 5 5 5t5-5M8 12v3M5 15.500h6" stroke="#2a7fd0" stroke-width="1.500"/></svg>
        <svg class="ico" viewBox="0 0 16 16"><rect y="2" width="16" height="12" rx="1" fill="#2a7fd0" stroke="none"/><path d="M2 5.500h12M2 8.500h12" stroke="#fff" stroke-dasharray="2 1"/><path d="M4 11.500h8" stroke="#fff"/></svg>
        <svg class="ico" viewBox="0 0 16 16"><circle cx="6" cy="4" r="3" fill="#c3cfe0" stroke="none"/><path d="M0 14V9l4-1h6v6z" fill="#c3cfe0" stroke="none"/><path d="M6 9.500h3v2H6v2h3M11.500 9v3h3M14.500 9v5" stroke="#8ea4c0"/></svg>
        <svg class="ico" viewBox="0 0 16 16"><path d="M5 1q3 2 6 0l5 3-2 4-2-1v8H4V7L2 8 0 4z" fill="#1a78c8" stroke="none"/></svg>
        <svg class="ico" viewBox="0 0 16 16"><path d="M2 14l7-7" stroke="#2a7fd0" stroke-width="3.500"/><path d="M12 1.500a3.500 3.500 0 1 0 3 4L12 6l-1-2z" fill="#2a7fd0" stroke="#2a7fd0"/></svg>
    </div>
    <div class="net">
        <svg class="ico net-logo" viewBox="0 0 38 38"><circle cx="19" cy="19" r="19" fill="#27cf74" stroke="none"/><path d="M6 16q13-11 26 0M10 21q9-8 18 0M14 25q5-4 10 0" stroke="#fff" stroke-width="3"/><circle cx="19" cy="29" r="2" fill="#fff" stroke="none"/></svg>
        <div>
            <p><svg class="ico small" viewBox="0 0 16 16"><path d="M5.500 1v13L2 11" stroke="#27b36a" stroke-width="2.500"/><path d="M10.500 15V2L14 5" stroke="#f07c12" stroke-width="2.500"/></svg>0.00K/s</p>
            <p><svg class="ico small" viewBox="0 0 16 16"><path d="M3 4h10v11H3z" stroke="#10b860" stroke-width="2"/><path d="M3 9h10v6H3zM4 1h4v2H4z" fill="#10b860" stroke="none"/></svg>0</p>
        </div>
    </div>

    <svg class="sprite" aria-hidden="true">
        <linearGradient id="gold" x1="0" y1="0" x2="1" y2="1"><stop offset="0" stop-color="#fff0a8"/><stop offset="1" stop-color="#e5a41c"/></linearGradient>
        <symbol id="app-logo" viewBox="0 0 24 24"><rect width="24" height="24" rx="4" fill="#0a8eee" stroke="none"/><path d="M14 6q-3-1-3 2v8q0 3-3 2M5 10q-1 3 2 3h10q3 0 2-3M13 17q2 1 3-1" stroke="#fff" stroke-width="2"/></symbol>
        <symbol id="folder" viewBox="0 0 16 16"><path d="M.5 2.500h5l1 2h9v9H.5z" fill="url(#gold)" stroke="#8a6a24"/></symbol>
        <symbol id="folder-open" viewBox="0 0 16 16"><path d="M.5 13V2.500h5l1 2h7v3" fill="#f4cf6c" stroke="#8a6a24"/><path d="M.5 13.500l3-6.500h12l-3 6.500z" fill="url(#gold)" stroke="#8a6a24"/></symbol>
        <symbol id="book" viewBox="0 0 16 16"><path d="M.5 1.500h15v13H.5z" fill="#cfe6f9" stroke="#2b7fc4"/><path d="M3.500 4.500h3v8h-3zM9.500 4.500h3v8h-3zM3 7.500h4M9 7.500h4" stroke="#2b7fc4"/></symbol>
        <symbol id="grade" viewBox="0 0 12 12"><path d="M4.500 1v9M7.500 1v9M3 10.500h6M2 3.500h8v4H2z" stroke="#000"/></symbol>
    </svg>
</body>
</html>
```
FILE: styles.css
```css
* {
    box-sizing: border-box;
}
html, body {
    height: 100%;
}
body {
    margin: 0;
    display: flex;
    flex-direction: column;
    overflow: hidden;
    background: #f0f0f0;
    color: #000;
    font-family: "Open Sans", "Noto Sans CJK SC", sans-serif;
    font-size: 12px;
    line-height: 16px;
}
h1, h2, h3, p, ul {
    margin: 0;
    padding: 0;
    font-size: inherit;
    font-weight: normal;
}
ul { list-style: none; }
button, select, input {
    margin: 0;
    padding: 0;
    border: 0;
    background: none;
    color: inherit;
    font: inherit;
}
svg {
    fill: none;
    display: block;
}
.ico {
    width: 16px;
    height: 16px;
    flex: none;
    stroke: currentColor;
}
.small {
    width: 12px;
    height: 12px;
}
.sprite {
    position: absolute;
    width: 0;
    height: 0;
}

/* title bar */
.titlebar {
    display: flex;
    align-items: center;
    gap: 5px;
    height: 23px;
    flex: none;
    padding-left: 2px;
    background: #fff;
    color: #999;
}
.titlebar h1 {
    flex: 1;
    font-size: 13px;
    white-space: nowrap;
    overflow: hidden;
}
.win-btns { display: flex; }
.win-btns button {
    width: 46px;
    display: flex;
    justify-content: center;
}

/* menus */
.menubar {
    display: flex;
    height: 30px;
    flex: none;
    white-space: nowrap;
    background: linear-gradient(#f0f0f0, #f4f4f4);
}
.menus {
    display: flex;
    gap: 12px;
    padding-left: 7px;
    width: 785px;
    flex: none;
}
.extra {
    display: flex;
    align-items: center;
    flex: 1;
    overflow: hidden;
}
.tip {
    margin-left: 32px;
    color: #0b6e6e;
    text-decoration: none;
}
.account {
    display: flex;
    align-items: center;
    width: 240px;
    padding-left: 1px;
    background: #f7f7f7;
}
.account .tb { padding-right: 6px; }

/* toolbar pieces */
.tb {
    display: flex;
    align-items: center;
    gap: 4px;
    height: 23px;
    padding: 0 4px 0 3px;
    white-space: nowrap;
    flex: none;
}
.tb:disabled { color: #808080; }
.tb:disabled .ico, .nav:disabled .ico { stroke: #b4b4b4; }
.tb.on {
    background: #dcebf7;
    box-shadow: inset 0 0 0 1px #0078d7;
}
.three-point { width: 87px; }
.caret {
    width: 8px;
    height: 3px;
    background: currentColor;
    clip-path: polygon(1px 0, 7px 0, 4px 3px);
}
.caret.tight { margin-left: -4px; }
.sep {
    width: 1px;
    height: 14px;
    margin: 0 2px;
    background: #b8b8b8;
    flex: none;
}
.grip {
    width: 3px;
    height: 14px;
    margin: 0 2px 0 4px;
    background: repeating-linear-gradient(#b0b0b0 0 2px, transparent 2px 4px);
    flex: none;
}
.group {
    display: flex;
    align-items: center;
    background: linear-gradient(#fcfcfc, #f1f1f1);
}
.more {
    width: 13px;
    margin-left: auto;
    align-self: flex-start;
    font-size: 14px;
    font-weight: 600;
}
.mainbar {
    display: flex;
    height: 30px;
    flex: none;
    gap: 2px;
}
.g-file {
    width: 151px;
    padding-left: 2px;
}
.g-define {
    width: 550px;
    padding-left: 2px;
}
.g-view { flex: 1; }

.combo {
    appearance: none;
    width: 57px;
    height: 23px;
    margin-right: 3px;
    padding: 0 12px 0 2px;
    background: #fff url("data:image/svg+xml,%3Csvg xmlns='http://www.w3.org/2000/svg' width='12' height='23'%3E%3Crect width='12' height='23' fill='%23f7f7f7'/%3E%3Cpath d='M3 10h6l-3 3z'/%3E%3C/svg%3E") right no-repeat;
}
.combo.wide { width: 69px; }

/* workspace */
.workspace {
    flex: 1;
    display: flex;
    min-height: 0;
    gap: 5px;
}
.sidebar {
    width: 254px;
    flex: none;
    display: flex;
    flex-direction: column;
    border-right: 1px solid #888;
    font-family: "Liberation Serif", "Noto Sans CJK SC", serif;
}
.side-title {
    display: flex;
    align-items: center;
    gap: 6px;
    height: 18px;
    padding-right: 3px;
    border: 1px solid #999;
}
.side-title h2 {
    flex: 1;
    font-size: 13px;
}
.side-btn {
    height: 22px;
    flex: none;
    border: 1px solid #a0a0a0;
    border-top-color: #fff;
    border-left-color: #fff;
    background: #f0f0f0;
}
.side-btn.pressed { border-bottom: 2px solid #777; }
.side-tools {
    display: flex;
    align-items: center;
    gap: 7px;
    height: 27px;
    padding-left: 7px;
    background: linear-gradient(#fdfdfd, #f0f0f0);
}
.tree {
    flex: 1;
    margin-left: 2px;
    padding-top: 1px;
    border: 1px solid #828790;
    background: #fff;
    overflow: hidden;
    white-space: nowrap;
}
.row, .leaf, .sel {
    display: flex;
    align-items: center;
    height: 16px;
}
.row::before {
    content: "";
    width: 6px;
    height: 6px;
    margin: 0 8px 0 7px;
    border: solid #999;
    border-width: 2px 2px 0 0;
    transform: rotate(45deg);
}
.row.open::before {
    border-color: #444;
    transform: rotate(135deg);
}
.row .folder { margin-right: 4px; }
.tree ul {
    margin-left: 12px;
    padding-left: 19px;
    border-left: 1px dotted #888;
}
.leaf { border-left: 1px dotted #888; }
.leaf::before {
    content: "";
    width: 9px;
    border-top: 1px dotted #888;
}
.leaf .ico { margin-right: 4px; }
.sel { background: #d8d8d8; }
.book { margin: 0 1px; }
.row .gap { margin-left: 5px; }
.leaf .book { margin-right: 1px; }
.new {
    padding: 0 1px;
    align-self: flex-start;
    background: #ffe400;
    font: bold 9px/8px "Liberation Sans", sans-serif;
}

.content {
    flex: 1;
    min-width: 0;
    display: flex;
    flex-direction: column;
}
.bars {
    flex: none;
    display: flex;
    flex-direction: column;
    gap: 2px;
    padding: 1px 0 2px;
}
.bar {
    display: flex;
    justify-content: flex-start;
    height: 26px;
}
.bar .group { flex: none; }
.bar .right {
    margin: 0 43px 0 auto;
}
.bar .stub {
    width: 30px;
    margin-left: 2px;
}

/* 3D view */
.viewport {
    position: relative;
    flex: 1;
    min-height: 0;
    background: #000;
}
.scene {
    width: 100%;
    height: 100%;
}
.mark {
    fill: #ddd;
    font: 13px "Liberation Sans", sans-serif;
    text-anchor: middle;
}
.rebar-panel {
    position: absolute;
    left: 9px;
    top: 2px;
    width: 168px;
    height: 179px;
    display: flex;
    flex-direction: column;
    padding: 1px;
    border: 1px solid #2a8bf2;
    background: #fff;
}
.rebar-panel h3 { padding: 7px 7px 8px; }
.checks {
    flex: 1;
    padding: 1px 3px;
    border: 1px solid #828790;
}
.checks label {
    display: flex;
    align-items: center;
    gap: 4px;
    height: 12px;
}
.checks span {
    flex: 1;
    line-height: 12px;
}
.focus span { outline: 1px dotted #000; }
input[type="checkbox"] {
    appearance: none;
    width: 11px;
    height: 11px;
    border: 1px solid #888;
    background: #fff;
}
input[type="checkbox"]:checked {
    background: url("data:image/svg+xml,%3Csvg xmlns='http://www.w3.org/2000/svg' width='9' height='9'%3E%3Cpath d='M1.500 4.500l2 2 4-4.500' fill='none' stroke='%23222'/%3E%3C/svg%3E");
}

/* snap options */
.snapbar {
    display: flex;
    flex: none;
    gap: 1px;
    height: 34px;
    padding: 0 0 3px 211px;
}
.snapbar .combo { margin-right: 2px; }
.num-field, .unit {
    display: flex;
    align-items: center;
    gap: 2px;
    color: #777;
    font-size: 13px;
}
.unit { margin: 0 4px 0 2px; }
.num-field input {
    appearance: none;
    width: 57px;
    height: 23px;
    padding-right: 18px;
    border: 1px solid #777;
    font-size: 12px;
    text-align: right;
    background: url("data:image/svg+xml,%3Csvg xmlns='http://www.w3.org/2000/svg' width='14' height='21'%3E%3Cpath d='M4 6h6l-3-3zM4 15h6l-3 3z' fill='%23555'/%3E%3C/svg%3E") right no-repeat;
}
.num-field input::-webkit-inner-spin-button { appearance: none; }
.num-field.long input { width: 67px; }
.rotate {
    display: flex;
    align-items: center;
    gap: 8px;
    margin-right: 4px;
}
.rotate input { background: #f6f6f6; }

/* rebar editor */
.dock {
    flex: none;
    display: flex;
    height: 199px;
}
.dock-grip {
    width: 12px;
    flex: none;
    display: flex;
    flex-direction: column;
    align-items: center;
    gap: 2px;
}
.dock-grip .ico {
    width: 10px;
    height: 10px;
}
.dock-grip i {
    width: 10px;
    flex: 1;
    background: radial-gradient(circle, #b4b4b4 1px, transparent 1px) 0 0 / 5px 5px;
}
.dock-body {
    flex: 1;
    min-width: 0;
    display: flex;
    flex-direction: column;
    margin-right: 2px;
}
.dock-tools {
    display: flex;
    align-items: center;
    height: 26px;
    flex: none;
    background: linear-gradient(#fdfdfd, #f0f0f0);
}
.nav {
    width: 24px;
    height: 22px;
    display: flex;
    align-items: center;
    justify-content: center;
}
.total { padding-left: 4px; }
.grid-wrap {
    flex: 1;
    overflow: hidden;
    border: 1px solid #a0a0a0;
    border-bottom: 0;
    background: #fff;
}
.grid {
    width: 1132px;
    table-layout: fixed;
    border-collapse: separate;
    border-spacing: 0;
    font-family: "Liberation Serif", "Noto Sans CJK SC", serif;
}
.grid col:nth-child(1) { width: 34px; }
.grid col:nth-child(2) { width: 73px; }
.grid col:nth-child(3) { width: 56px; }
.grid col:nth-child(4) { width: 36px; }
.grid col:nth-child(5) { width: 33px; }
.grid col:nth-child(6) { width: 201px; }
.grid col:nth-child(7) { width: 166px; }
.grid col:nth-child(8) { width: 156px; }
.grid col:nth-child(9),
.grid col:nth-child(13),
.grid col:nth-child(14) { width: 61px; }
.grid col:nth-child(10) { width: 38px; }
.grid col:nth-child(11) { width: 39px; }
.grid col:nth-child(12) { width: 49px; }
.grid th, .grid td {
    height: 20px;
    padding: 0 2px;
    border: solid #b8b8b8;
    border-width: 0 1px 1px 0;
    font-weight: normal;
    text-align: left;
    white-space: nowrap;
    overflow: hidden;
}
.grid th {
    padding: 0;
    background: linear-gradient(#fff, #ececec);
    text-align: center;
}
.grid td { font-family: "Liberation Sans", "Noto Sans CJK SC", sans-serif; }
.grid tbody td:nth-child(2) { border-right-color: #000; }
.grid th.active {
    background: linear-gradient(#fbd08a, #f3bb62);
    color: #5c0a4e;
}
.grid tbody th { font-family: "Liberation Sans", sans-serif; }
.grid tbody th.active { background: #ffd28c; }
.tall td, .tall th { height: 61px; }
.mid td, .mid th { height: 29px; }
.blank td, .blank th { height: 19px; }
.tall td, .mid td { background: #ccffd8; }
.grid td.cur { background: #abead8; }
.grid td.shape { padding: 0; }
.shape svg { width: 200px; }
.shape text {
    font: 11px "Liberation Sans", sans-serif;
    fill: #000;
}
.shape .red { fill: #f00; }
.grade svg { margin: 0 auto; }
.hscroll {
    display: flex;
    height: 19px;
    flex: none;
    padding-bottom: 1px;
    border: 1px solid #a0a0a0;
    border-top: 0;
    background: #f0f0f0;
}
.hscroll button {
    width: 18px;
    display: flex;
    align-items: center;
    justify-content: center;
}
.track { flex: 1; }
.thumb {
    width: 66%;
    height: 15px;
    background: #cdcdcd;
}

/* status bar */
.statusbar {
    display: flex;
    flex: none;
    gap: 3px;
    height: 22px;
    padding: 1px 0;
    font-family: "Liberation Serif", "Noto Sans CJK SC", serif;
}
.statusbar span {
    padding: 1px;
    border: 1px solid #d4d4d4;
    background: linear-gradient(#fdfdfd, #f0f0f0);
    white-space: nowrap;
}
.s-pos { width: 147px; }
.s-floor { width: 77px; }
.s-base { width: 97px; }
.s-count { width: 47px; }
.s-fill { flex: 1; }
.s-fps { width: 70px; }

/* taskbar */
.taskbar {
    display: flex;
    flex: none;
    height: 40px;
    background: #020b0f;
    color: #fff;
}
.taskbar button {
    display: flex;
    align-items: center;
    justify-content: center;
}
.start {
    width: 48px;
    background: #000;
}
.search {
    display: flex;
    align-items: center;
    gap: 5px;
    width: 344px;
    padding: 0 12px 0 8px;
    background: #333;
}
.search input {
    flex: 1;
    min-width: 0;
    font-size: 14px;
    line-height: 20px;
}
.search input::placeholder { color: #9a9a9a; }
.ring {
    width: 24px;
    height: 24px;
}
.apps { display: flex; }
.apps button {
    width: 48px;
    margin-right: 2px;
}
.apps .ico {
    width: 24px;
    height: 24px;
}
.apps .bell { width: 28px; }
.apps .run {
    background: linear-gradient(#76b9ed, #76b9ed) bottom / 40px 2px no-repeat;
}
.apps .current {
    background-color: #343c40;
    background-size: 48px 2px;
}
.tray {
    flex: 1;
    display: flex;
    align-items: center;
    justify-content: flex-end;
    gap: 8px;
    padding-right: 25px;
    text-align: center;
    line-height: 18px;
    white-space: nowrap;
}
.t-cpu { margin: 0 12px; }
.t-ime {
    margin: 0 3px;
    font-size: 19px;
}
.t-clock { margin: 0 12px 0 8px; }
.wifi { width: 20px; }
.kbd { width: 24px; }

/* floating widgets */
.ball {
    position: absolute;
    left: 1007px;
    top: -29px;
    width: 48px;
    height: 48px;
    padding-top: 26px;
    border: 2px solid #d4d4d4;
    border-radius: 50%;
    background: #43c552;
    box-shadow: 0 1px 3px #888;
    color: #fff;
    font-weight: bold;
    text-align: center;
}
.ime-bar {
    position: absolute;
    left: 768px;
    top: 16px;
    display: flex;
    align-items: center;
    gap: 6px;
    width: 208px;
    height: 24px;
    border: 1px solid #a9c0dc;
    border-left: 0;
    background: #fff;
    color: #2a7fd0;
    font-size: 18px;
}
.ime-logo {
    width: 28px;
    height: 28px;
}
.ime-bar b {
    width: 16px;
    font-weight: 600;
    text-align: center;
}
.net {
    position: absolute;
    left: 1074px;
    top: 82px;
    display: flex;
    align-items: center;
    gap: 5px;
    width: 122px;
    height: 51px;
    padding-left: 6px;
    border: 1px solid #bbb;
    border-radius: 26px;
    background: #fff;
    box-shadow: 0 2px 4px #999;
    color: #555;
    font-size: 11px;
}
.net-logo {
    width: 38px;
    height: 38px;
}
.net p {
    display: flex;
    align-items: center;
    gap: 3px;
    height: 20px;
}
```
